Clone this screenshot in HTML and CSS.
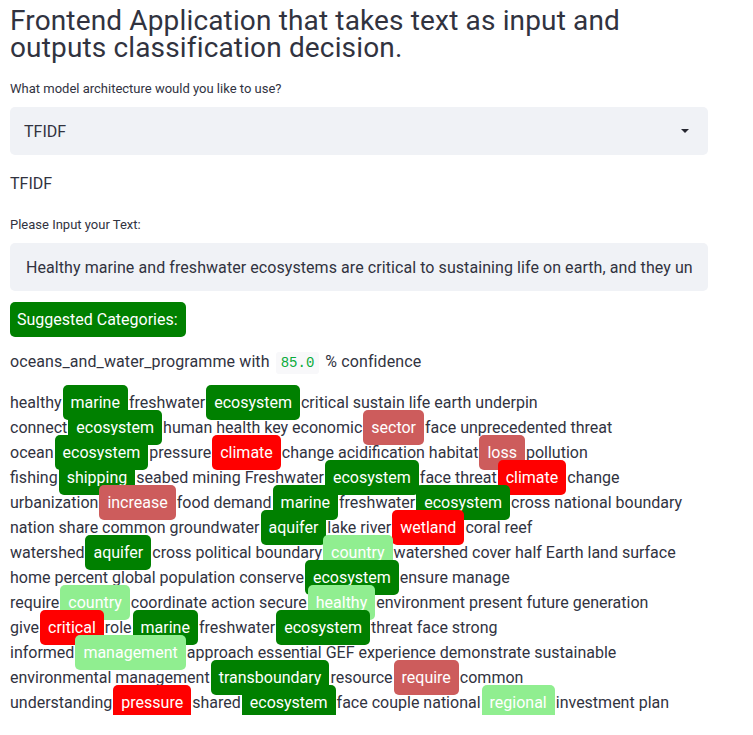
FILE: index.html
```html
<!DOCTYPE html>
<html>
<head>
<meta charset="utf-8">
<link rel="stylesheet" href="styles.css">
</head>
<body>
<div class="main">
  <h1 class="title">Frontend Application that takes text as input and outputs classification decision.</h1>

  <div class="label label-model">What model architecture would you like to use?</div>
  <div class="select">
    <span class="select-value">TFIDF</span>
    <svg class="caret" width="10" height="6" viewBox="0 0 10 6"><path d="M1 1 L9 1 L5 5 Z" fill="#262730"/></svg>
  </div>

  <p class="plain">TFIDF</p>

  <div class="label label-input">Please Input your Text:</div>
  <div class="input">Healthy marine and freshwater ecosystems are critical to sustaining life on earth, and they un</div>

  <div class="badge">Suggested Categories:</div>

  <p class="confidence">oceans_and_water_programme with <code class="code">85.0</code> % confidence</p>

  <div class="annotated">
    <div class="line">healthy<span class="t g">marine</span>freshwater<span class="t g">ecosystem</span>critical sustain life earth underpin</div>
    <div class="line">connect<span class="t g">ecosystem</span>human health key economic<span class="t ir">sector</span>face unprecedented threat</div>
    <div class="line">ocean<span class="t g">ecosystem</span>pressure<span class="t r">climate</span>change acidification habitat<span class="t ir">loss</span>pollution</div>
    <div class="line">fishing<span class="t g">shipping</span>seabed mining Freshwater<span class="t g">ecosystem</span>face threat<span class="t r">climate</span>change</div>
    <div class="line">urbanization<span class="t ir">increase</span>food demand<span class="t g">marine</span>freshwater<span class="t g">ecosystem</span>cross national boundary</div>
    <div class="line">nation share common groundwater<span class="t g">aquifer</span>lake river<span class="t r">wetland</span>coral reef</div>
    <div class="line">watershed<span class="t g">aquifer</span>cross political boundary<span class="t lg">country</span>watershed cover half Earth land surface</div>
    <div class="line">home percent global population conserve<span class="t g">ecosystem</span>ensure manage</div>
    <div class="line">require<span class="t lg">country</span>coordinate action secure<span class="t lg">healthy</span>environment present future generation</div>
    <div class="line">give<span class="t r">critical</span>role<span class="t g">marine</span>freshwater<span class="t g">ecosystem</span>threat face strong</div>
    <div class="line">informed<span class="t lg">management</span>approach essential GEF experience demonstrate sustainable</div>
    <div class="line">environmental management<span class="t g">transboundary</span>resource<span class="t ir">require</span>common</div>
    <div class="line">understanding<span class="t r">pressure</span>shared<span class="t g">ecosystem</span>face couple national<span class="t lg">regional</span>investment plan</div>
  </div>
</div>
</body>
</html>
```

FILE: styles.css
```css
html, body {
  margin: 0;
  padding: 0;
  background: #ffffff;
}

body {
  font-family: Roboto, "Liberation Sans", sans-serif;
  color: #31333f;
}

.main {
  width: 698px;
  padding: 7px 0 0 10px;
}

.title {
  margin: 0;
  max-width: 650px;
  font-size: 28px;
  line-height: 27px;
  font-weight: 400;
  letter-spacing: 0.15px;
  color: #31333f;
}

.label {
  font-size: 13px;
  line-height: 16px;
  color: #31333f;
}

.label-model {
  margin-top: 20px;
}

.select {
  margin-top: 10px;
  height: 48px;
  background: #f0f2f6;
  border-radius: 5px;
  display: flex;
  align-items: center;
  justify-content: space-between;
  padding: 0 18px 0 14px;
}

.select-value {
  font-size: 16px;
}

.caret {
  display: block;
}

.plain {
  margin: 17px 0 0 0;
  font-size: 16px;
  line-height: 24px;
}

.label-input {
  margin-top: 21px;
}

.input {
  margin-top: 10px;
  height: 48px;
  background: #f0f2f6;
  border-radius: 5px;
  display: flex;
  align-items: center;
  padding: 0 16px;
  font-size: 16px;
  letter-spacing: 0.07px;
  white-space: nowrap;
  overflow: hidden;
}

.badge {
  display: inline-block;
  margin-top: 11px;
  background: #008000;
  color: #ffffff;
  font-size: 16px;
  line-height: 35px;
  padding: 0 8px 0 7px;
  border-radius: 5px;
}

.confidence {
  margin: 13px 0 0 0;
  font-size: 16px;
  line-height: 24px;
  letter-spacing: 0.1px;
}

.code {
  font-family: "Liberation Mono", "DejaVu Sans Mono", monospace;
  font-size: 14px;
  color: #09ab3b;
  background: #f8f8fa;
  padding: 3px 5px;
  margin: 0 2px;
  border-radius: 3px;
  letter-spacing: 0;
}

.annotated {
  margin-top: 15px;
  font-size: 16px;
  line-height: 25px;
}

.line {
  white-space: nowrap;
}

.t {
  color: #ffffff;
  padding: 8px 8px;
  margin: 0 1px;
  border-radius: 5px;
}

.g { background: #008000; }
.r { background: #ff0000; }
.ir { background: #cd5c5c; }
.lg { background: #90ee90; }
```
